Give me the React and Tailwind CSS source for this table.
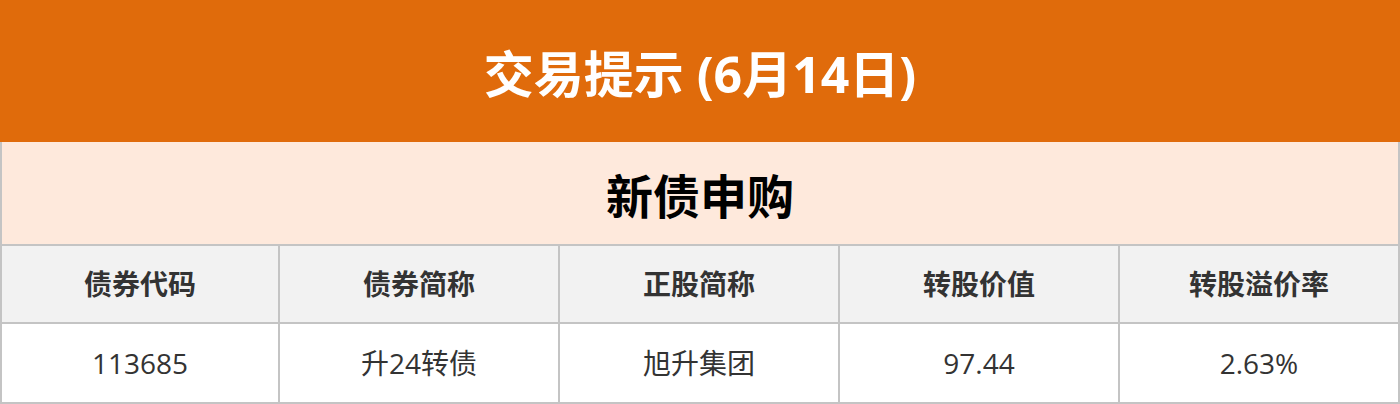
export default function App() {
  const headers = ["债券代码", "债券简称", "正股简称", "转股价值", "转股溢价率"];
  const values = ["113685", "升24转债", "旭升集团", "97.44", "2.63%"];
  const font = { fontFamily: '"Open Sans", "Noto Sans CJK SC", sans-serif' };
  return (
    <div className="w-[1400px] h-[404px] bg-white" style={font}>
      <div className="h-[142px] bg-[#e06b0b] flex items-center justify-center">
        <span className="text-[50px] font-bold text-white leading-none pt-[6px]">交易提示 (6月14日)</span>
      </div>
      <div className="h-[102px] bg-[#fee9dc] border-x-2 border-[#c4c4c4] flex items-center justify-center">
        <span className="text-[47px] font-bold text-black leading-none pt-[6px]">新债申购</span>
      </div>
      <div className="border-2 border-[#c4c4c4] grid grid-cols-[276px_280px_280px_280px_280px]">
        {headers.map((h, i) => (
          <div
            key={h}
            className={`h-[76px] bg-[#f2f2f2] flex items-center justify-center text-[28px] font-bold text-[#333333] ${i > 0 ? "border-l-2 border-[#c4c4c4]" : ""}`}
          >
            {h}
          </div>
        ))}
        {values.map((v, i) => (
          <div
            key={v}
            className={`h-[80px] border-t-2 border-[#c4c4c4] bg-white flex items-center justify-center text-[28px] text-[#333333] ${i > 0 ? "border-l-2" : ""}`}
          >
            {v}
          </div>
        ))}
      </div>
    </div>
  );
}
